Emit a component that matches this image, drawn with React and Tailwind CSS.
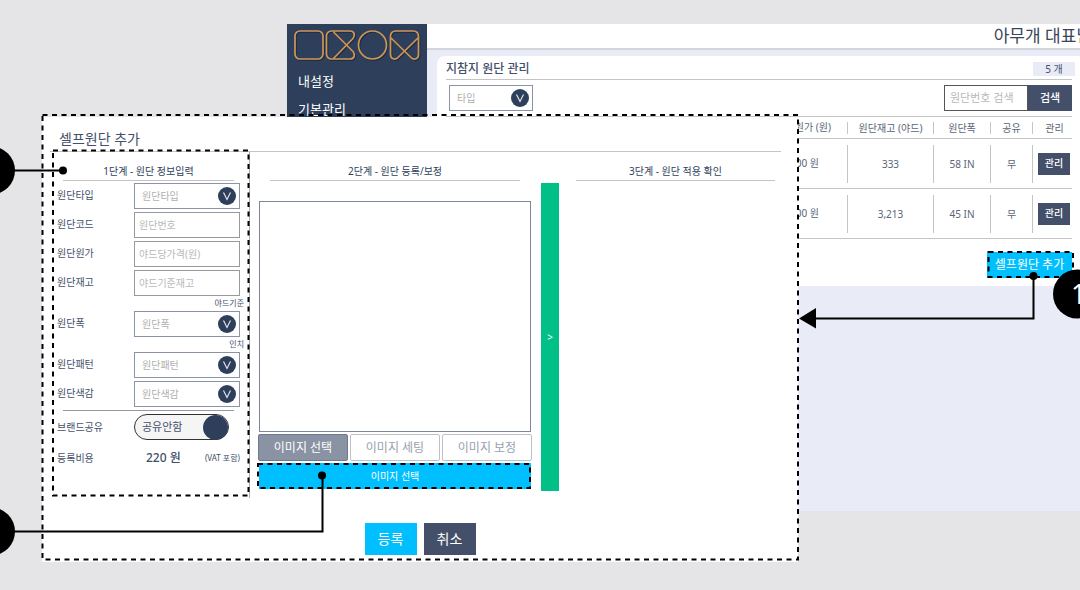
import React, { useState } from "react";

const FABRICS = [
    { price: "4,500 원", stock: "333", width: "58 IN", share: "무" },
    { price: "3,200 원", stock: "3,213", width: "45 IN", share: "무" },
];

const IMAGE_TABS = ["이미지 선택", "이미지 세팅", "이미지 보정"];

function Logo() {
    return (
        <svg viewBox="0 0 126 30" className="h-[30px] w-[126px] drop-shadow-[1px_1px_0_#1d2a40]" fill="none" stroke="#cf9655" strokeWidth="1.7" aria-hidden="true">
            <rect x="1" y="1" width="28" height="28" rx="5" />
            <path d="M39.5 2 L59 21.5 C61.5 24.5 60.5 29 56 29 H37.5 A5 5 0 0 1 32.5 24 V6 A5 5 0 0 1 37.5 1 H56 C60.5 1 61.5 5.5 59 8.5 L39.5 28.5" />
            <circle cx="78.5" cy="15" r="14" />
            <path d="M97 8 L117 27.5 C120 30.5 124.5 29 124.5 24.5 V6 A5 5 0 0 0 119.5 1 H101.5 A5 5 0 0 0 96.5 6 V24.5 C96.5 29 101 30.5 104 27.5 L124 8" />
        </svg>
    );
}

function Sidebar() {
    return (
        <nav className="w-[140px] shrink-0 bg-[#2e3f5b] px-[7px] pt-[6px] text-[13px] text-white">
            <Logo />
            <ul className="mt-[7px] px-1">
                <li className="h-7 leading-7">
                    <a href="#settings">내설정</a>
                </li>
                <li className="h-7 leading-7">
                    <a href="#basic">기본관리</a>
                </li>
            </ul>
        </nav>
    );
}

function SelectBox({ id, label, className }) {
    return (
        <div className={`relative border border-[#8a94a6] bg-white ${className}`}>
            <select id={id} aria-label={label} className="block h-full w-full appearance-none bg-transparent pt-px pl-[7px] text-[10px] text-[#b0b0b0] outline-none">
                <option>{label}</option>
            </select>
            <svg viewBox="0 0 18 18" className="pointer-events-none absolute top-1/2 right-[3px] size-[18px] -translate-y-1/2" aria-hidden="true">
                <circle cx="9" cy="9" r="9" fill="#2e3f5b" />
                <path d="M5.5 5.5 L9 12.5 L12.5 5.5" fill="none" stroke="#dfe3ea" strokeWidth="1.2" />
            </svg>
        </div>
    );
}

function FabricTable() {
    const cell = "border-l border-[#c4c4c4]";
    return (
        <table className="w-full table-fixed border-collapse text-center text-[10px] text-[#5a6577]">
            <colgroup>
                <col />
                <col className="w-[86px]" />
                <col className="w-[57px]" />
                <col className="w-[42px]" />
                <col className="w-[40px]" />
            </colgroup>
            <thead>
                <tr className="h-[22px] border-y border-[#c4c4c4]">
                    <th className="pr-4 text-right font-normal">원단원가 (원)</th>
                    <th className="p-0 font-normal"><div className="border-l border-[#c4c4c4] leading-3">원단재고 (야드)</div></th>
                    <th className="p-0 font-normal"><div className="border-l border-[#c4c4c4] leading-3">원단폭</div></th>
                    <th className="p-0 font-normal"><div className="border-l border-[#c4c4c4] leading-3">공유</div></th>
                    <th className="p-0 font-normal"><div className="border-l border-[#c4c4c4] pl-1 leading-3">관리</div></th>
                </tr>
            </thead>
            <tbody>
                {FABRICS.map((row) => (
                    <tr key={row.stock} className="h-[50px] border-b border-[#c4c4c4]">
                        <td className="pr-7 text-right">{row.price}</td>
                        <td className="p-0"><div className={`${cell} leading-[38px]`}>{row.stock}</div></td>
                        <td className="p-0"><div className={`${cell} leading-[38px]`}>{row.width}</div></td>
                        <td className="p-0"><div className={`${cell} leading-[38px]`}>{row.share}</div></td>
                        <td className="p-0">
                            <div className={`${cell} flex h-[38px] items-center justify-end pr-[2px]`}>
                                <button type="button" className="h-[22px] w-8 bg-[#44506a] font-medium text-white">관리</button>
                            </div>
                        </td>
                    </tr>
                ))}
            </tbody>
        </table>
    );
}

function ManagePage() {
    return (
        <div className="ml-[287px] flex min-h-[487px] bg-[#e9ebf6]">
            <Sidebar />
            <div className="min-w-0 flex-1">
                <header className="flex h-[26px] justify-end overflow-hidden border-b-2 border-[#d3d5dc] bg-white">
                    <span className="-mr-3 text-[17px] leading-6 whitespace-nowrap text-[#3a4558]">아무개 대표님</span>
                </header>
                <main className="mt-[6px] ml-[10px] h-[230px] rounded-tl-lg bg-white pr-2 pl-[9px]">
                    <div className="flex h-6 items-center justify-between border-b border-[#c4c4c4] pt-[2px] text-[#44506a]">
                        <h1 className="text-xs font-medium">지참지 원단 관리</h1>
                        <span className="mr-[-3px] h-[14px] w-[42px] bg-[#e9ebf6] text-center text-[10px] leading-[14px]">5 개</span>
                    </div>
                    <div className="flex h-9 items-center justify-between pl-[3px]">
                        <SelectBox id="type" label="타입" className="h-[26px] w-[84px]" />
                        <form className="flex h-[26px]" onSubmit={(e) => e.preventDefault()}>
                            <input aria-label="원단번호 검색" placeholder="원단번호 검색" className="w-[84px] border border-[#555] pl-[5px] text-[11px] outline-none placeholder:text-[#b8b8b8]" />
                            <button type="submit" className="w-11 bg-[#44506a] text-[11px] font-medium text-white">검색</button>
                        </form>
                    </div>
                    <FabricTable />
                    <div className="mt-[13px] flex justify-end">
                        <button type="button" className="h-[26px] w-[85px] bg-[#00bfff] text-xs text-white">셀프원단 추가</button>
                    </div>
                </main>
            </div>
        </div>
    );
}

function Field({ id, label, children }) {
    return (
        <div className="flex h-[29px] items-center justify-between">
            <label htmlFor={id} className="text-[10px] text-[#44506a]">{label}</label>
            {children}
        </div>
    );
}

function TextBox({ id, placeholder }) {
    return (
        <input id={id} placeholder={placeholder} className="h-[26px] w-[106px] border border-[#999] pl-1 text-[10px] outline-none placeholder:text-[#b8b8b8]" />
    );
}

function StepTitle({ children }) {
    return <h3 className="h-[29px] border-b border-[#c4c4c4] pt-[9px] text-center text-[10px] leading-5 text-[#2e3f5b]">{children}</h3>;
}

function StepInfo() {
    const [shared, setShared] = useState(false);

    return (
        <section className="w-[208px] border-r border-[#aaa] pr-[9px] pl-[15px]">
            <div className="mx-[6px]"><StepTitle>1단계 - 원단 정보입력</StepTitle></div>
            <div>
                <Field id="fabric-type" label="원단타입"><SelectBox id="fabric-type" label="원단타입" className="h-[26px] w-[106px]" /></Field>
                <Field id="fabric-code" label="원단코드"><TextBox id="fabric-code" placeholder="원단번호" /></Field>
                <Field id="fabric-cost" label="원단원가"><TextBox id="fabric-cost" placeholder="야드당가격(원)" /></Field>
                <Field id="fabric-stock" label="원단재고"><TextBox id="fabric-stock" placeholder="야드기준재고" /></Field>
            </div>
            <p className="-mr-1 h-3 text-right text-[8px] leading-3 text-[#44506a]">야드기준</p>
            <Field id="fabric-width" label="원단폭"><SelectBox id="fabric-width" label="원단폭" className="h-[26px] w-[106px]" /></Field>
            <p className="-mr-1 h-3 text-right text-[8px] leading-3 text-[#44506a]">인치</p>
            <Field id="fabric-pattern" label="원단패턴"><SelectBox id="fabric-pattern" label="원단패턴" className="h-[26px] w-[106px]" /></Field>
            <Field id="fabric-color" label="원단색감"><SelectBox id="fabric-color" label="원단색감" className="h-[26px] w-[106px]" /></Field>
            <hr className="mx-[6px] mt-[2px] border-[#999]" />
            <div className="mt-[3px] flex h-[26px] items-center">
                <label htmlFor="share" className="w-[77px] text-[10px] text-[#44506a]">브랜드공유</label>
                <button
                    id="share"
                    type="button"
                    role="switch"
                    aria-checked={shared}
                    onClick={() => setShared(!shared)}
                    className="flex h-[26px] w-[95px] items-center justify-between rounded-full border border-[#333] bg-[#f5f5f5] pl-[7px] text-[11px] text-[#44506a]"
                >
                    공유안함
                    <span className="size-[25px] rounded-full bg-[#2e3f5b]"></span>
                </button>
            </div>
            <div className="mt-[6px] flex h-6 items-center text-[10px] text-[#44506a]">
                <span className="w-[89px]">등록비용</span>
                <strong className="flex-1 text-xs font-medium">220 원</strong>
                <span className="text-[8px]">(VAT 포함)</span>
            </div>
        </section>
    );
}

function StepImage() {
    const [tab, setTab] = useState(0);

    return (
        <section className="ml-[9px] w-[272px]">
            <div className="mx-[11px]"><StepTitle>2단계 - 원단 등록/보정</StepTitle></div>
            <div className="mt-5 h-[231px] border border-[#7d879a]"></div>
            <div className="-mx-px mt-[2px] flex gap-[2px]">
                {IMAGE_TABS.map((name, i) => (
                    <button
                        key={name}
                        type="button"
                        onClick={() => setTab(i)}
                        className={`h-[27px] flex-1 rounded-xs border text-xs ${tab === i ? "border-[#6f7a8f] bg-[#8a93a3] text-white" : "border-[#bcc1ca] text-[#98a0ad]"}`}
                    >
                        {name}
                    </button>
                ))}
            </div>
            <button type="button" className="mt-[2px] h-[26px] w-full bg-[#00bfff] text-[10px] text-white">이미지 선택</button>
        </section>
    );
}

function AddFabricDialog() {
    return (
        <div role="dialog" aria-labelledby="dialog-title" className="absolute top-[117px] left-[42px] w-[70%] bg-white pb-[7px]">
            <h2 id="dialog-title" className="mr-[17px] ml-2 h-[35px] border-b border-[#c4c4c4] pt-[10px] pl-[9px] text-sm leading-6 text-[#44506a]">셀프원단 추가</h2>
            <div className="flex h-[346px]">
                <StepInfo />
                <StepImage />
                <button type="button" aria-label="다음 단계" className="mt-[31px] ml-[10px] h-[308px] w-[18px] bg-[#00c087] text-[10px] text-white">&gt;</button>
                <section className="mr-[23px] ml-[17px] flex-1">
                    <StepTitle>3단계 - 원단 적용 확인</StepTitle>
                </section>
            </div>
            <div className="mt-[25px] flex justify-center gap-[7px] text-sm text-white">
                <button type="button" className="h-8 w-[52px] bg-[#00bfff]">등록</button>
                <button type="button" className="h-8 w-[52px] bg-[#44506a]">취소</button>
            </div>
        </div>
    );
}

// Call-outs of the manual: dashed frames, numbered dots and connector lines
function Annotations() {
    return (
        <svg width="1080" height="590" className="pointer-events-none absolute top-0 left-0" fill="none" stroke="#000" strokeWidth="2" aria-hidden="true">
            <g strokeDasharray="5 4.5">
                <rect x="42.5" y="115" width="755.5" height="444.5" />
                <rect x="53" y="150.5" width="195.5" height="345" />
                <rect x="258" y="464" width="272" height="24" />
                <rect x="988.5" y="252" width="84.5" height="25" />
            </g>
            <path d="M0 170.5 H63" />
            <path d="M0 531.5 H322.5 V476" />
            <path d="M1033.5 277 V318.5 H812" />
            <g fill="#000" stroke="none">
                <circle cx="63" cy="170.5" r="4" />
                <circle cx="322" cy="475.5" r="4" />
                <circle cx="1033.5" cy="276" r="4" />
                <path d="M799 318.5 L816 308 V328.5 Z" />
                <circle cx="-9" cy="170.5" r="24" />
                <circle cx="-9" cy="531.5" r="24" />
                <circle cx="1077.5" cy="294" r="24.5" />
            </g>
            <text x="1071" y="304" fill="#fff" stroke="none" fontSize="27">1</text>
        </svg>
    );
}

function App() {
    return (
        <div className="relative min-h-screen overflow-hidden bg-[#e5e5e7] pt-6 font-['Noto_Sans','Noto_Sans_CJK_KR',sans-serif]">
            <ManagePage />
            <AddFabricDialog />
            <Annotations />
        </div>
    );
}

export default App;
